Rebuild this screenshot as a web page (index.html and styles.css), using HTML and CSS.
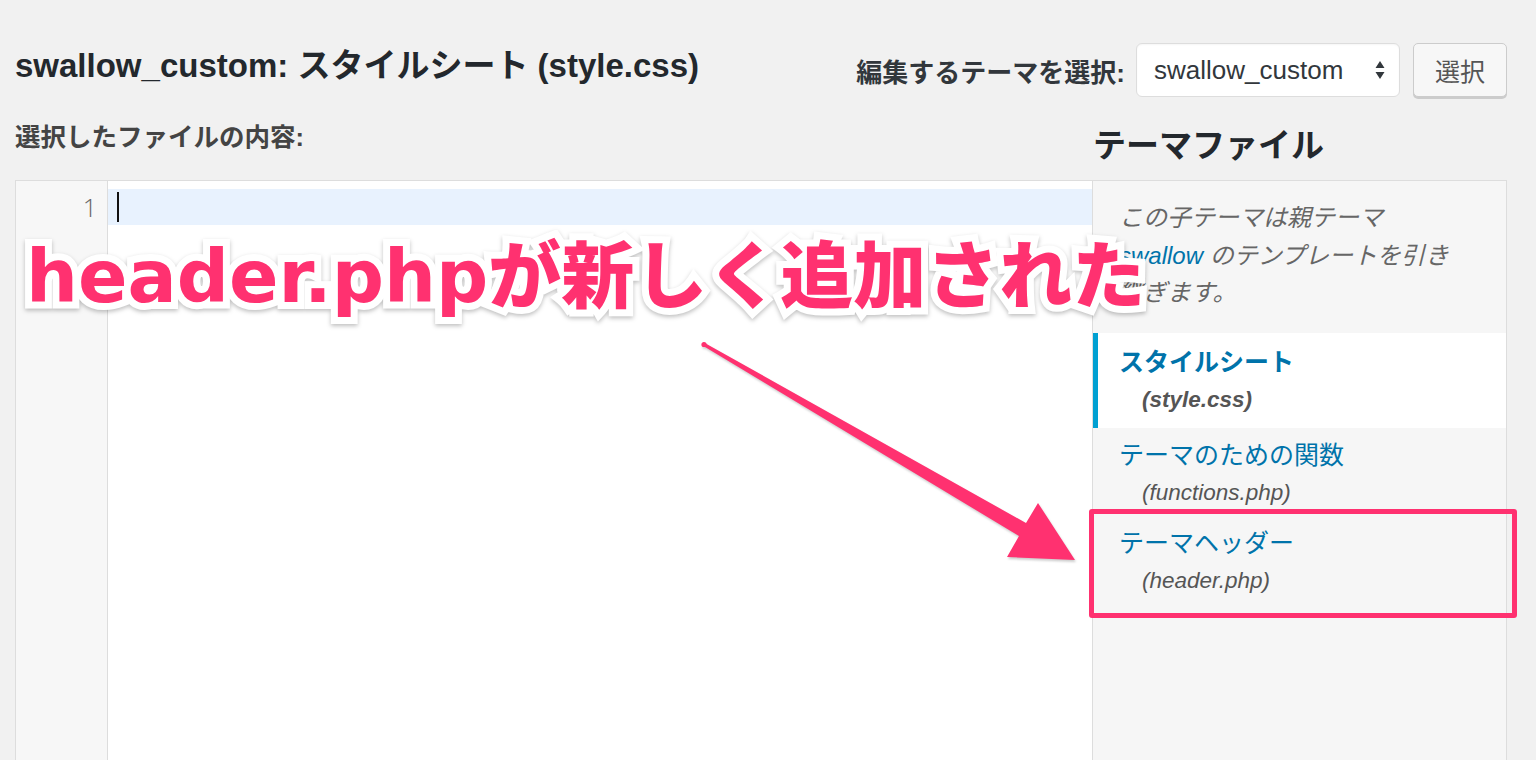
FILE: index.html
```html
<!DOCTYPE html>
<html lang="ja">

<head>
  <meta charset="UTF-8">
  <meta name="viewport" content="width=device-width, initial-scale=1.0">
  <title>テーマの編集</title>
  <link rel="stylesheet" href="styles.css">
</head>

<body>
  <div class="wrap">
    <div class="TopBar">
      <h1>swallow_custom: スタイルシート (style.css)</h1>
      <form class="ThemeSelect">
        <label for="theme">編集するテーマを選択:</label>
        <div class="SelectBox" id="theme">
          <span>swallow_custom</span>
          <svg class="SelectArrows" viewBox="0 0 10 20">
            <path d="M5 1l4.5 7h-9z M5 19l4.5-7h-9z" />
          </svg>
        </div>
        <button type="button">選択</button>
      </form>
    </div>

    <div class="EditorLayout">
      <div class="FileLabel">選択したファイルの内容:</div>
      <h2>テーマファイル</h2>

      <div class="Code">
        <div class="Code-gutter">
          <div class="Code-num">1</div>
        </div>
        <div class="Code-lines">
          <div class="Code-line is-active"><span class="Cursor"></span></div>
        </div>
      </div>

      <div class="FileList">
        <p class="FileList-note">この子テーマは親テーマ<br><a href="#">swallow</a> のテンプレートを引き<br>継ぎます。</p>
        <ul>
          <li class="is-current">
            <a href="#">スタイルシート</a>
            <span class="FileList-name">(style.css)</span>
          </li>
          <li>
            <a href="#">テーマのための関数</a>
            <span class="FileList-name">(functions.php)</span>
          </li>
          <li>
            <a href="#">テーマヘッダー</a>
            <span class="FileList-name">(header.php)</span>
          </li>
        </ul>
      </div>
    </div>
  </div>

  <!-- annotation layer -->
  <div class="Callout">header.phpが新しく追加された</div>
  <svg class="Arrow" viewBox="0 0 1536 760">
    <circle cx="704" cy="344.5" r="2.6" />
    <polygon points="703,342 1026,523 1038,503 1075,560 1007,557 1019,536 705,347" />
  </svg>
  <div class="Highlight"></div>
</body>

</html>
```

FILE: styles.css
```css
body {
  background: #f1f1f1;
  color: #23282d;
  font-family: "Liberation Sans", "Noto Sans CJK JP", sans-serif;
  margin: 0;
  position: relative;
  height: 760px;
  overflow: hidden;
}

* {
  box-sizing: border-box;
}

a {
  color: #0073aa;
  text-decoration: none;
}

ul {
  margin: 0;
  padding: 0;
  list-style: none;
}

.wrap {
  padding: 0 29px 0 15px;
}

.TopBar {
  display: flex;
  justify-content: space-between;
  align-items: flex-start;
  padding-top: 43px;
}

h1 {
  margin: 1px 0 0;
  font-size: 33px;
  line-height: 44px;
  font-weight: bold;
}

.ThemeSelect {
  display: flex;
  align-items: center;
  margin: 0;
}

.ThemeSelect label {
  font-size: 26px;
  font-weight: bold;
  color: #32373c;
  margin-right: 11px;
  margin-top: 1px;
}

.SelectBox {
  display: flex;
  align-items: center;
  justify-content: space-between;
  width: 264px;
  height: 54px;
  padding: 0 14px 0 17px;
  background: #fff;
  border: 1px solid #ddd;
  border-radius: 6px;
  box-shadow: inset 0 1px 2px rgba(0, 0, 0, .04);
  font-size: 26px;
  color: #32373c;
}

.SelectArrows {
  width: 10px;
  height: 20px;
  fill: #32373c;
}

button {
  -webkit-appearance: none;
  appearance: none;
  margin-left: 13px;
  width: 94px;
  height: 54px;
  background: #f7f7f7;
  border: 1px solid #ccc;
  border-radius: 5px;
  box-shadow: 0 2px 0 #ccc;
  color: #555;
  font-family: inherit;
  font-size: 25px;
  margin-top: -1px;
}

.EditorLayout {
  display: grid;
  grid-template-columns: 1077px 415px;
  grid-template-rows: 83px 1fr;
}

.FileLabel {
  padding-top: 19px;
  font-size: 25.5px;
  font-weight: bold;
  color: #444;
}

h2 {
  align-self: end;
  margin: 0 0 12px 1px;
  font-size: 33px;
  line-height: 44px;
  font-weight: bold;
  color: #23282d;
}

.Code {
  display: flex;
  height: 600px;
  background: #fff;
  border: 1px solid #ddd;
  border-right: 0;
}

.Code-gutter {
  width: 92px;
  background: #f7f7f7;
  border-right: 1px solid #ddd;
  padding: 8px 10px 0 0;
}

.Code-num {
  text-align: right;
  font-size: 25px;
  line-height: 36px;
  color: #666;
  font-family: "Open Sans", sans-serif;
  font-weight: 300;
}

.Code-lines {
  flex: 1;
  padding-top: 8px;
}

.Code-line {
  height: 36px;
  padding: 3px 0 0 9px;
}

.Code-line.is-active {
  background: #e8f2fe;
}

.Cursor {
  display: block;
  width: 2px;
  height: 30px;
  background: #111;
}

.FileList {
  background: #f6f6f6;
  border: 1px solid #ddd;
  height: 600px;
}

.FileList-note {
  margin: 0;
  padding: 18px 20px 21px 26px;
  font-size: 24px;
  line-height: 37.5px;
  font-style: italic;
  color: #666;
}

.FileList li {
  padding: 9px 0 5px 26px;
  font-size: 25px;
}

.FileList li a {
  display: block;
  line-height: 36px;
}

.FileList li.is-current {
  padding: 11px 0 10px 21px;
  background: #fff;
  border-left: 5px solid #00a0d2;
}

.FileList li.is-current a {
  font-weight: bold;
}

.FileList-name {
  display: block;
  padding: 2px 0 0 23px;
  line-height: 36px;
  font-size: 22.5px;
  font-style: italic;
  color: #555;
}

.is-current .FileList-name {
  font-weight: bold;
}

.Callout {
  position: absolute;
  left: 26px;
  top: 227px;
  font-family: "DejaVu Sans", "Noto Sans CJK JP", sans-serif;
  font-weight: 900;
  font-size: 73px;
  line-height: 100px;
  white-space: nowrap;
  color: #ff3170;
  -webkit-text-stroke: 14px #fff;
  paint-order: stroke fill;
  filter: drop-shadow(0 2px 2px rgba(0, 0, 0, .25));
}

.Arrow {
  position: absolute;
  left: 0;
  top: 0;
  width: 1536px;
  height: 760px;
  fill: #ff3170;
  filter: drop-shadow(1px 2px 1px rgba(0, 0, 0, .2));
  pointer-events: none;
}

.Highlight {
  position: absolute;
  left: 1089px;
  top: 509px;
  width: 428px;
  height: 109px;
  border: 5px solid #ff3170;
  border-radius: 3px;
}
```
